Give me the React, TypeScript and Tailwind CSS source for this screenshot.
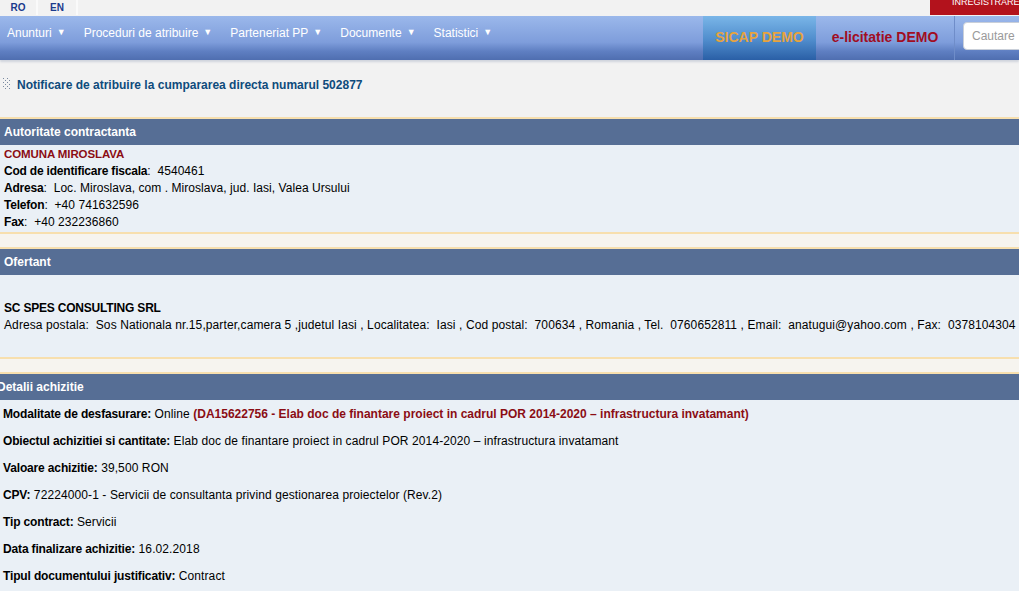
import React from "react";

const navItems = ["Anunturi", "Proceduri de atribuire", "Parteneriat PP", "Documente", "Statistici"];

const SectionHeader = ({ title, className = "" }: { title: string; className?: string }) => (
  <div className="border-t-2 border-[#f7dfae] bg-[#566e95]">
    <div className={`h-[26px] flex items-center pl-[4px] text-white font-bold text-[12px] ${className}`}>{title}</div>
  </div>
);

const Gap = () => <div className="h-[15px] border-t-2 border-[#f7dfae] bg-[#f6f4ef]" />;

const DetailRow = ({ label, children }: { label: string; children: React.ReactNode }) => (
  <div className="h-[27px] flex items-center pl-[3px] whitespace-nowrap tracking-[0.1px]">
    <span className="font-bold tracking-[-0.15px]">{label}</span>&nbsp;{children}
  </div>
);

export default function App() {
  return (
    <div className="w-[1019px] h-[591px] overflow-hidden bg-[#f2f2f2] text-black font-['Liberation_Sans',Arial,sans-serif]">
      {/* top language bar */}
      <div className="h-[16px] flex items-start relative">
        <div className="w-[38px] h-[15px] flex justify-center items-center text-[10px] font-bold text-[#1b3a8c] border-r-2 border-[#fafafa]">RO</div>
        <div className="w-[40px] h-[15px] flex justify-center items-center text-[10px] font-bold text-[#1b3a8c] border-r-2 border-[#fafafa]">EN</div>
        <div className="ml-auto w-[89px] h-[15px] bg-[#b3121c] text-white text-[9px] leading-none pl-[22px] overflow-hidden">
          <div className="-mt-[2px]">INREGISTRARE</div>
        </div>
      </div>

      {/* main nav */}
      <div className="h-[44px] flex bg-[linear-gradient(#9bb8eb,#7e9ddb_60%,#5f7fc2_80%,#4f6eb0)] shadow-[0_2px_2px_#cfd4dc]">
        <div className="flex items-center pl-[7px] h-[34px] gap-[18px] text-white text-[12px]">
          {navItems.map((n) => (
            <span key={n} className="flex items-center">
              {n}
              <span className="ml-[5px] text-[9px]">▼</span>
            </span>
          ))}
        </div>
        <div className="ml-auto flex">
          <div className="w-[113px] h-[44px] flex items-center justify-center pb-[2px] bg-[linear-gradient(#7ab6e8,#4f8ccc_55%,#2a5fa6)] text-[#e7a33e] font-bold text-[14px]">
            SICAP DEMO
          </div>
          <div className="w-[139px] h-[44px] flex items-center justify-center pb-[2px] text-[#a10d22] font-bold text-[14px] border-r border-[#6f8dc9]">
            e-licitatie DEMO
          </div>
          <div className="pl-[8px] pt-[6px] w-[64px]">
            <div className="h-[28px] w-[70px] bg-white rounded-[4px] border border-[#c9cfd9] flex items-center pl-[8px] text-[#9a9a9a] text-[12px]">
              Cautare
            </div>
          </div>
        </div>
      </div>

      {/* title */}
      <div className="h-[57px] flex items-start pl-[2px] pt-[16px]">
        <svg width="10" height="12" viewBox="0 0 10 12" className="mr-[5px] mt-[2px]">
          {[0, 1, 2, 3, 4, 5].map((r) =>
            [0, 1, 2, 3].map((c) =>
              (r + c) % 2 === 0 ? <rect key={`${r}-${c}`} x={c * 2 + 1} y={r * 2} width="1" height="1" fill="#7a8aa0" /> : null
            )
          )}
        </svg>
        <span className="text-[12px] font-bold text-[#0e4b7c]">Notificare de atribuire la cumpararea directa numarul 502877</span>
      </div>

      {/* Autoritate contractanta */}
      <SectionHeader title="Autoritate contractanta" />
      <div className="bg-[#eaf0f6] pl-[4px] pt-[1px] pb-[1px] text-[12px] leading-[17px] tracking-[0.05px]">
        <div className="font-bold text-[#8b0d14] text-[11.5px] tracking-[-0.1px]">COMUNA MIROSLAVA</div>
        <div><span className="font-bold tracking-[-0.2px]">Cod de identificare fiscala</span>:&nbsp; 4540461</div>
        <div><span className="font-bold tracking-[-0.2px]">Adresa</span>:&nbsp; Loc. Miroslava, com . Miroslava, jud. Iasi, Valea Ursului</div>
        <div><span className="font-bold tracking-[-0.2px]">Telefon</span>:&nbsp; +40 741632596</div>
        <div><span className="font-bold tracking-[-0.2px]">Fax</span>:&nbsp; +40 232236860</div>
      </div>
      <Gap />

      {/* Ofertant */}
      <SectionHeader title="Ofertant" />
      <div className="h-[82px] bg-[#eaf0f6] pl-[4px] pt-[25px] text-[12px] leading-[17px]">
        <div className="font-bold tracking-[-0.2px]">SC SPES CONSULTING SRL</div>
        <div className="whitespace-nowrap tracking-[0.1px]">
          Adresa postala:&nbsp; Sos Nationala nr.15,parter,camera 5 ,judetul Iasi , Localitatea:&nbsp; Iasi , Cod postal:&nbsp; 700634 , Romania , Tel.&nbsp; 0760652811 , Email:&nbsp; anatugui@yahoo.com , Fax:&nbsp; 0378104304
        </div>
      </div>
      <Gap />

      {/* Detalii achizitie */}
      <SectionHeader title="Detalii achizitie" className="-ml-[7px]" />
      <div className="bg-[#eaf0f6] text-[12px] pb-[2px] border-b-2 border-[#f7dfae]">
        <DetailRow label="Modalitate de desfasurare:">
          Online
          <span className="font-bold text-[#8b0d14] tracking-[0px]">
            &nbsp;(DA15622756 - Elab doc de finantare proiect in cadrul POR 2014-2020 – infrastructura invatamant)
          </span>
        </DetailRow>
        <DetailRow label="Obiectul achizitiei si cantitate:">
          Elab doc de finantare proiect in cadrul POR 2014-2020 – infrastructura invatamant
        </DetailRow>
        <DetailRow label="Valoare achizitie:">39,500 RON</DetailRow>
        <DetailRow label="CPV:">72224000-1 - Servicii de consultanta privind gestionarea proiectelor (Rev.2)</DetailRow>
        <DetailRow label="Tip contract:">Servicii</DetailRow>
        <DetailRow label="Data finalizare achizitie:">16.02.2018</DetailRow>
        <DetailRow label="Tipul documentului justificativ:">Contract</DetailRow>
      </div>
    </div>
  );
}
